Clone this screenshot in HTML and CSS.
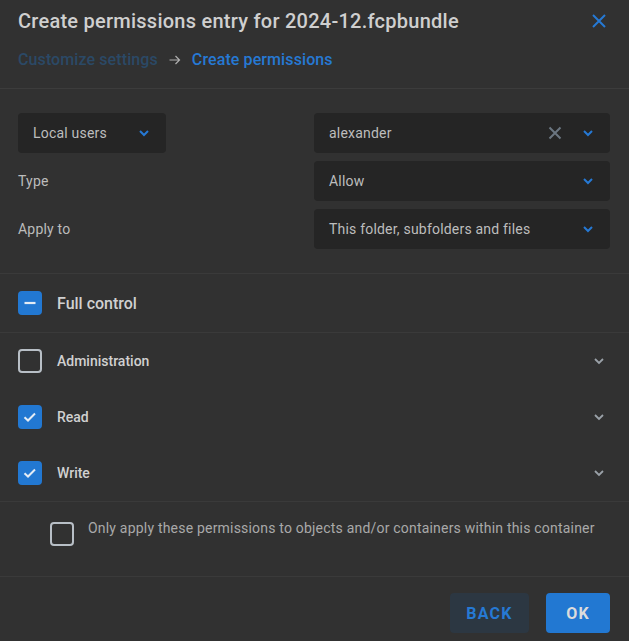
FILE: index.html
```html
<!DOCTYPE html>
<html lang="en">
<head>
  <meta charset="utf-8">
  <title>Create permissions entry</title>
  <link rel="stylesheet" href="styles.css">
</head>
<body>
  <div class="dialog">
    <div class="head">
      <h1>Create permissions entry for 2024-12.fcpbundle</h1>
      <button class="close" aria-label="Close">
        <svg width="14" height="14" viewBox="0 0 14 14"><path d="M1 1L13 13M13 1L1 13" stroke="currentColor" stroke-width="2"/></svg>
      </button>
    </div>
    <div class="crumbs">
      <span class="crumb done">Customize settings</span>
      <svg class="arrow" width="12" height="10" viewBox="0 0 12 10"><path d="M0.5 5H10.5M6.5 1L10.5 5L6.5 9" fill="none" stroke="currentColor" stroke-width="1.2"/></svg>
      <span class="crumb">Create permissions</span>
    </div>

    <div class="fields">
      <div class="select small">
        <span>Local users</span>
        <svg class="chev" width="12" height="8" viewBox="0 0 12 8"><path d="M2 2L6 6L10 2" fill="none" stroke="currentColor" stroke-width="2"/></svg>
      </div>
      <div class="select">
        <span>alexander</span>
        <svg class="clear" width="14" height="14" viewBox="0 0 14 14"><path d="M1.5 1.5L12.5 12.5M12.5 1.5L1.5 12.5" stroke="currentColor" stroke-width="2"/></svg>
        <svg class="chev" width="12" height="8" viewBox="0 0 12 8"><path d="M2 2L6 6L10 2" fill="none" stroke="currentColor" stroke-width="2"/></svg>
      </div>
      <label>Type</label>
      <div class="select">
        <span>Allow</span>
        <svg class="chev" width="12" height="8" viewBox="0 0 12 8"><path d="M2 2L6 6L10 2" fill="none" stroke="currentColor" stroke-width="2"/></svg>
      </div>
      <label>Apply to</label>
      <div class="select">
        <span>This folder, subfolders and files</span>
        <svg class="chev" width="12" height="8" viewBox="0 0 12 8"><path d="M2 2L6 6L10 2" fill="none" stroke="currentColor" stroke-width="2"/></svg>
      </div>
    </div>

    <div class="full">
      <span class="box on">
        <svg width="16" height="16" viewBox="0 0 16 16"><path d="M2.5 8H13.5" stroke="currentColor" stroke-width="2.2"/></svg>
      </span>
      <span>Full control</span>
    </div>

    <div class="perms">
      <div class="perm">
        <span class="box"></span>
        <span class="name">Administration</span>
        <svg class="more" width="12" height="8" viewBox="0 0 12 8"><path d="M2 2L6 6L10 2" fill="none" stroke="currentColor" stroke-width="1.8"/></svg>
      </div>
      <div class="perm">
        <span class="box on">
          <svg width="16" height="16" viewBox="0 0 16 16"><path d="M2.5 8.2L6 11.5L13 4.5" fill="none" stroke="currentColor" stroke-width="2"/></svg>
        </span>
        <span class="name">Read</span>
        <svg class="more" width="12" height="8" viewBox="0 0 12 8"><path d="M2 2L6 6L10 2" fill="none" stroke="currentColor" stroke-width="1.8"/></svg>
      </div>
      <div class="perm">
        <span class="box on">
          <svg width="16" height="16" viewBox="0 0 16 16"><path d="M2.5 8.2L6 11.5L13 4.5" fill="none" stroke="currentColor" stroke-width="2"/></svg>
        </span>
        <span class="name">Write</span>
        <svg class="more" width="12" height="8" viewBox="0 0 12 8"><path d="M2 2L6 6L10 2" fill="none" stroke="currentColor" stroke-width="1.8"/></svg>
      </div>
    </div>

    <div class="only">
      <span class="box"></span>
      <span>Only apply these permissions to objects and/or containers within this container</span>
    </div>

    <div class="foot">
      <button class="btn back">BACK</button>
      <button class="btn ok">OK</button>
    </div>
  </div>
</body>
</html>
```

FILE: styles.css
```css
html, body {
  margin: 0;
  background: #313131;
}
body {
  font-family: Roboto, "Liberation Sans", sans-serif;
  color: #c6c6c6;
  letter-spacing: 0.2px;
}
.dialog {
  width: 629px;
  height: 641px;
  display: flex;
  flex-direction: column;
}
.head {
  display: flex;
  align-items: center;
  justify-content: space-between;
  padding: 7px 23px 0 18px;
  height: 27px;
}
.head h1 {
  margin: 0;
  font-size: 20px;
  font-weight: 500;
  color: #cfcfcf;
  letter-spacing: 0.25px;
}
.close {
  background: none;
  border: 0;
  padding: 0;
  color: #2679d4;
  display: flex;
}
.crumbs {
  padding: 16px 18px 0;
  height: 38px;
  font-size: 16px;
  letter-spacing: 0.1px;
  display: flex;
  align-items: flex-start;
  gap: 11px;
  border-bottom: 1px solid #3c3c3c;
}
.crumb {
  color: #2679d4;
  font-weight: 500;
}
.crumb.done {
  color: #2b4966;
}
.arrow {
  color: #b0b0b0;
  margin-top: 5px;
}
.fields {
  display: grid;
  grid-template-columns: 1fr 296px;
  column-gap: 18px;
  row-gap: 8px;
  align-items: center;
  padding: 24px 19px 24px 18px;
  border-bottom: 1px solid #3a3a3a;
}
.fields label {
  font-size: 14px;
  color: #bcbcbc;
}
.select {
  height: 40px;
  background: #252525;
  border-radius: 4px;
  display: flex;
  align-items: center;
  padding: 0 16px 0 15px;
  font-size: 14px;
  color: #bdbdbd;
}
.select span {
  flex: 1;
}
.select.small {
  width: 148px;
  box-sizing: border-box;
}
.select .chev {
  color: #2679d4;
}
.select .clear {
  color: #6b7681;
  margin-right: 20px;
}
.full {
  display: flex;
  align-items: center;
  gap: 15px;
  padding: 0 18px;
  height: 58px;
  font-size: 16px;
  font-weight: 500;
  letter-spacing: 0;
  color: #d0d0d0;
  border-bottom: 1px solid #3a3a3a;
}
.box {
  width: 24px;
  height: 24px;
  box-sizing: border-box;
  border: 2px solid #b8bfc6;
  border-radius: 4px;
  display: flex;
  align-items: center;
  justify-content: center;
  flex: none;
}
.box.on {
  background: #2278d2;
  border-color: #2278d2;
  color: #e4ecf5;
}
.perms {
  border-bottom: 1px solid #3a3a3a;
}
.perm {
  display: flex;
  align-items: center;
  gap: 15px;
  height: 56px;
  padding: 0 24px 0 18px;
  font-size: 14px;
  font-weight: 500;
  letter-spacing: 0;
  color: #d0d0d0;
}
.perm .name {
  flex: 1;
}
.perm .more {
  color: #9aa1a8;
}
.only {
  display: flex;
  align-items: flex-start;
  gap: 14px;
  padding: 19px 18px 0 50px;
  height: 55px;
  font-size: 14px;
  color: #a9a9a9;
  border-bottom: 1px solid #3a3a3a;
}
.only .box {
  margin-top: 1px;
}
.only span:last-child {
  margin-top: -1px;
}
.foot {
  display: flex;
  justify-content: flex-end;
  gap: 17px;
  padding: 16px 19px 0;
}
.btn {
  height: 40px;
  border: 0;
  border-radius: 4px;
  font-family: Roboto, "Liberation Sans", sans-serif;
  font-size: 16px;
  font-weight: 700;
  letter-spacing: 1.2px;
}
.btn.back {
  width: 79px;
  background: #2c3742;
  color: #2679d4;
}
.btn.ok {
  width: 64px;
  background: #2278d2;
  color: #dcdcdc;
}
```
